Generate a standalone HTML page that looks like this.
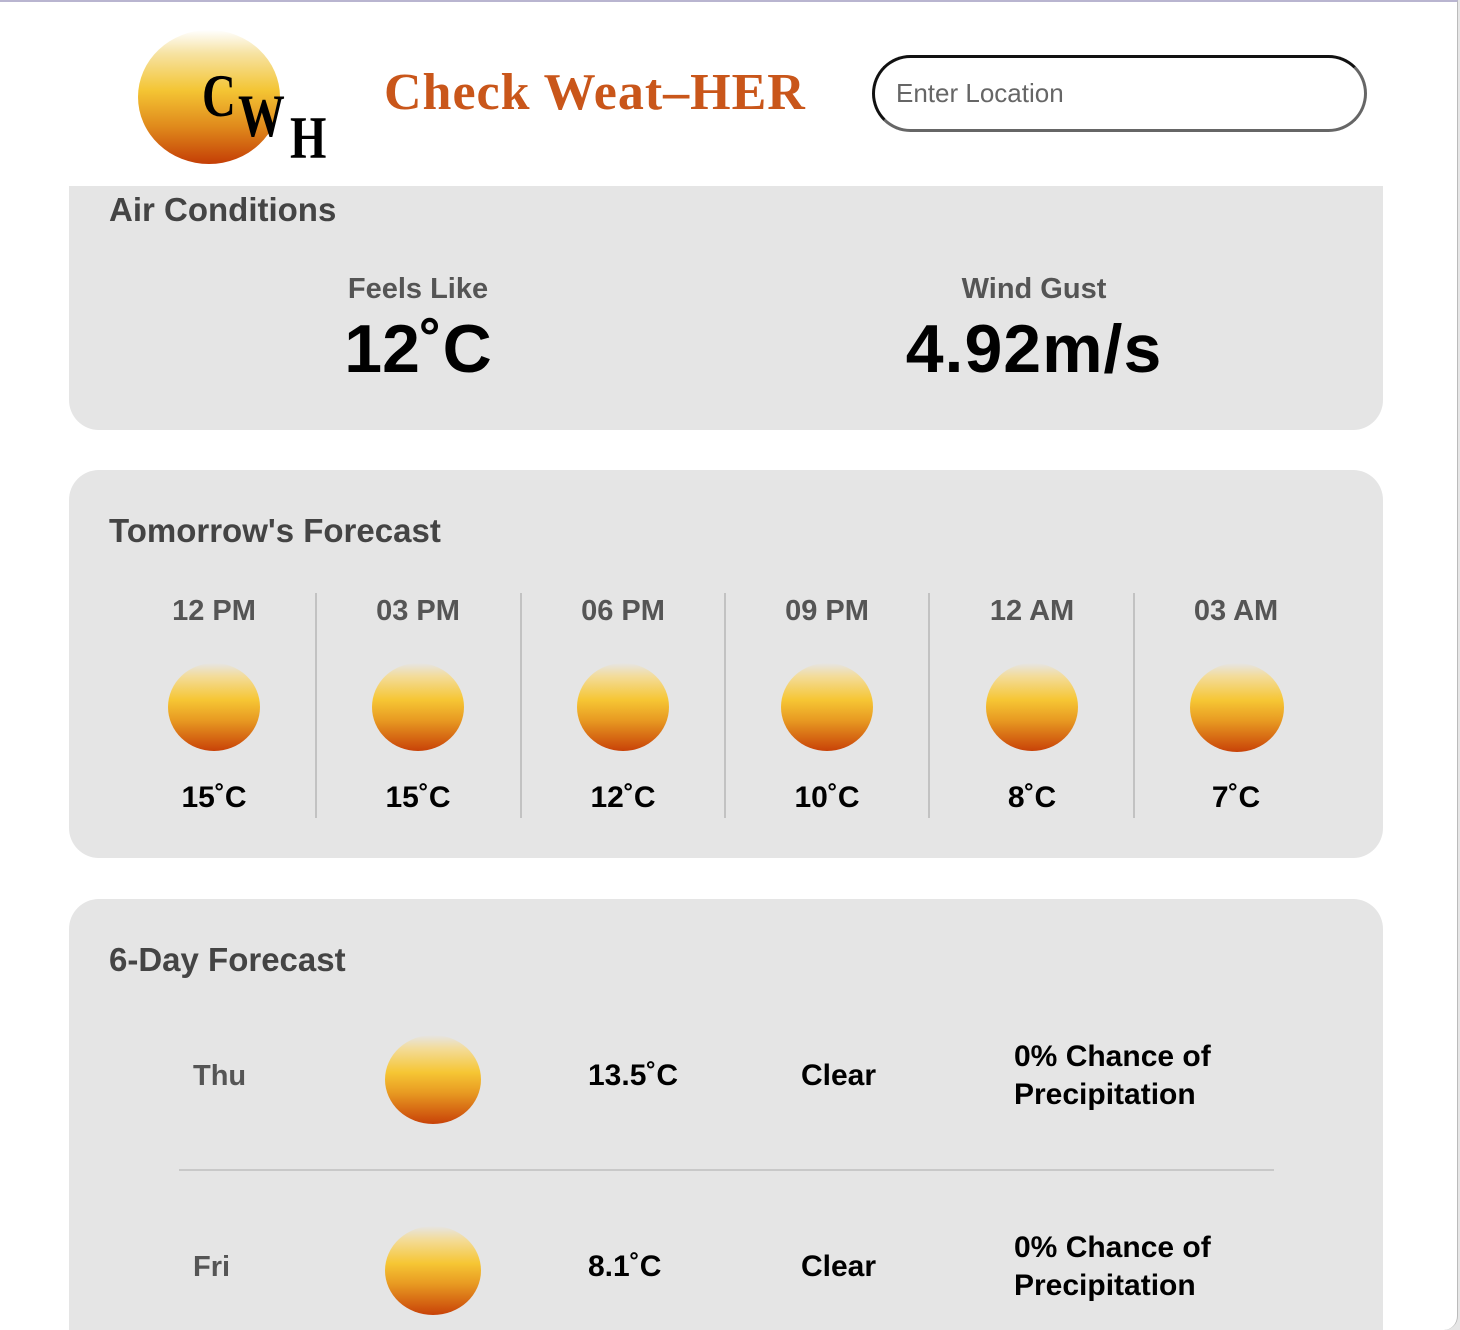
<!DOCTYPE html>
<html><head><meta charset="utf-8"><style>
*{margin:0;padding:0;box-sizing:border-box}
html{overflow:hidden;width:1460px;height:1330px}
body{width:1460px;height:1330px;background:#e6e6e6;position:relative;overflow:hidden;font-family:"Liberation Sans",Arial,sans-serif}
.page{position:absolute;left:0;top:0;width:1458px;height:1330px;background:#fff;border-top:2px solid #b9b5d0;border-right:1px solid #bbb;border-bottom-right-radius:14px;overflow:hidden}
.a{position:absolute;white-space:nowrap}
.c{text-align:center}
.card{position:absolute;left:69px;width:1314px;background:#e5e5e5;border-radius:30px}
.sun{position:absolute;border-radius:50%;background:linear-gradient(to bottom,#e5e5e5 0%,#f3dc9a 15%,#f6c634 42%,#e89a22 65%,#c84208 100%)}
.h{font-weight:bold;color:#444;font-size:33px}
.lab{font-weight:bold;color:#555;font-size:29px}
.t{font-weight:bold;color:#000;font-size:30px}
.div{position:absolute;top:591px;width:2px;height:225px;background:#c2c2c2}
.lg{position:absolute;font-family:'Liberation Serif',serif;font-weight:bold;font-size:60px;line-height:64px;transform:scaleX(0.78);transform-origin:left}
</style></head><body>
<div class="page">
 <div class="sun" style="left:138px;top:28px;width:142px;height:134px;background:linear-gradient(to bottom,#fff 0%,#f6e2a0 18%,#f4c534 45%,#e08a1c 72%,#c43e06 100%)"></div>
 <div class="lg" style="left:202px;top:62px">C</div>
 <div class="lg" style="left:238px;top:82px">W</div>
 <div class="lg" style="left:290px;top:104px">H</div>
 <div class="a" style="left:384px;top:60px;font-family:'Liberation Serif',serif;font-weight:bold;font-size:52px;line-height:62px;color:#c9561a;letter-spacing:1px">Check Weat–HER</div>
 <div class="a" style="left:872px;top:53px;width:495px;height:77px;border:3px solid;border-color:#111 #666 #666 #111;border-radius:40px"></div>
 <div class="a" style="left:896px;top:76px;font-size:26px;line-height:30px;color:#666">Enter Location</div>

 <div class="card" style="top:184px;height:244px;border-radius:0 0 30px 30px"></div>
 <div class="a h" style="left:109px;top:188px;line-height:40px">Air Conditions</div>
 <div class="a lab c" style="left:218px;width:400px;top:269px;line-height:36px">Feels Like</div>
 <div class="a c" style="left:218px;width:400px;top:309px;font-size:68px;font-weight:bold;line-height:76px">12˚C</div>
 <div class="a lab c" style="left:834px;width:400px;top:269px;line-height:36px">Wind Gust</div>
 <div class="a c" style="left:834px;width:400px;top:309px;font-size:68px;font-weight:bold;line-height:76px;letter-spacing:1px">4.92m/s</div>

 <div class="card" style="top:468px;height:388px"></div>
 <div class="a h" style="left:109px;top:509px;line-height:40px">Tomorrow's Forecast</div>

 <div class="a lab c" style="left:114px;width:200px;top:591px;line-height:36px">12 PM</div>
 <div class="a lab c" style="left:318px;width:200px;top:591px;line-height:36px">03 PM</div>
 <div class="a lab c" style="left:523px;width:200px;top:591px;line-height:36px">06 PM</div>
 <div class="a lab c" style="left:727px;width:200px;top:591px;line-height:36px">09 PM</div>
 <div class="a lab c" style="left:932px;width:200px;top:591px;line-height:36px">12 AM</div>
 <div class="a lab c" style="left:1136px;width:200px;top:591px;line-height:36px">03 AM</div>
 <div class="sun" style="left:168px;top:661px;width:92px;height:88px"></div>
 <div class="sun" style="left:372px;top:661px;width:92px;height:88px"></div>
 <div class="sun" style="left:577px;top:661px;width:92px;height:88px"></div>
 <div class="sun" style="left:781px;top:661px;width:92px;height:88px"></div>
 <div class="sun" style="left:986px;top:661px;width:92px;height:88px"></div>
 <div class="sun" style="left:1190px;top:661px;width:94px;height:89px"></div>
 <div class="a t c" style="left:114px;width:200px;top:778px;line-height:36px">15˚C</div>
 <div class="a t c" style="left:318px;width:200px;top:778px;line-height:36px">15˚C</div>
 <div class="a t c" style="left:523px;width:200px;top:778px;line-height:36px">12˚C</div>
 <div class="a t c" style="left:727px;width:200px;top:778px;line-height:36px">10˚C</div>
 <div class="a t c" style="left:932px;width:200px;top:778px;line-height:36px">8˚C</div>
 <div class="a t c" style="left:1136px;width:200px;top:778px;line-height:36px">7˚C</div>
 <div class="div" style="left:315px"></div>
 <div class="div" style="left:520px"></div>
 <div class="div" style="left:724px"></div>
 <div class="div" style="left:928px"></div>
 <div class="div" style="left:1133px"></div>

 <div class="card" style="top:897px;height:460px"></div>
 <div class="a h" style="left:109px;top:938px;line-height:40px">6-Day Forecast</div>

 <div class="a lab" style="left:193px;top:1056px;line-height:36px">Thu</div>
 <div class="sun" style="left:385px;top:1033px;width:96px;height:89px"></div>
 <div class="a t" style="left:588px;top:1056px;line-height:36px">13.5˚C</div>
 <div class="a t" style="left:801px;top:1056px;line-height:36px">Clear</div>
 <div class="a t" style="left:1014px;top:1036px;line-height:38px">0% Chance of<br>Precipitation</div>
 <div class="a" style="left:179px;top:1167px;width:1095px;height:2px;background:#c8c8c8"></div>
 <div class="a lab" style="left:193px;top:1247px;line-height:36px">Fri</div>
 <div class="sun" style="left:385px;top:1224px;width:96px;height:89px"></div>
 <div class="a t" style="left:588px;top:1247px;line-height:36px">8.1˚C</div>
 <div class="a t" style="left:801px;top:1247px;line-height:36px">Clear</div>
 <div class="a t" style="left:1014px;top:1227px;line-height:38px">0% Chance of<br>Precipitation</div>
</div>
</body></html>
